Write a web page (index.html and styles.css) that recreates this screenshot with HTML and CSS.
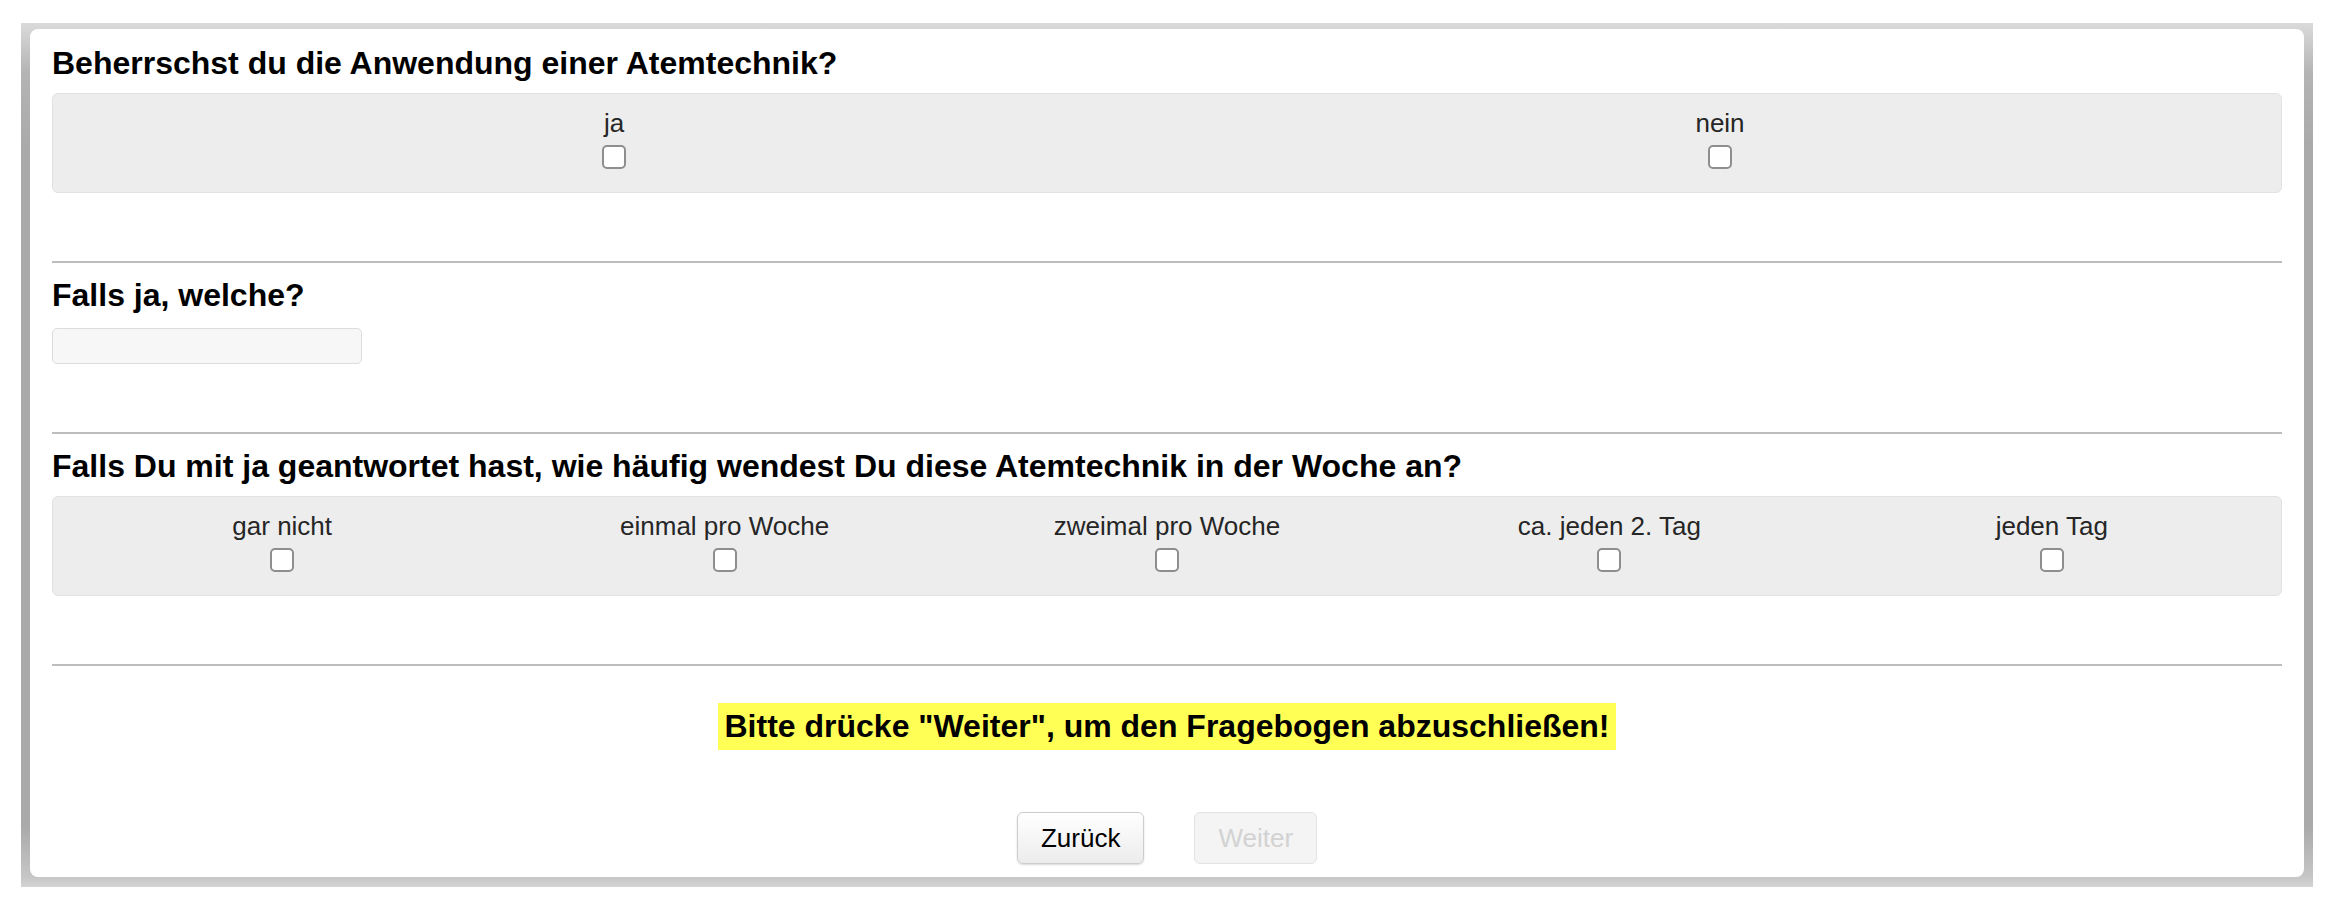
FILE: index.html
```html
<!DOCTYPE html>
<html lang="de">
<head>
<meta charset="utf-8">
<title>Fragebogen</title>
<link rel="stylesheet" href="styles.css">
</head>
<body>
<div class="frame">
  <div class="card">
    <section class="question first">
      <h2 class="q-title">Beherrschst du die Anwendung einer Atemtechnik?</h2>
      <div class="options cols-2">
        <label class="option"><span class="opt-label">ja</span><input type="checkbox" class="check"></label>
        <label class="option"><span class="opt-label">nein</span><input type="checkbox" class="check"></label>
      </div>
    </section>
    <hr class="sep">
    <section class="question">
      <h2 class="q-title">Falls ja, welche?</h2>
      <input type="text" class="text-input">
    </section>
    <hr class="sep">
    <section class="question">
      <h2 class="q-title">Falls Du mit ja geantwortet hast, wie häufig wendest Du diese Atemtechnik in der Woche an?</h2>
      <div class="options cols-5">
        <label class="option"><span class="opt-label">gar nicht</span><input type="checkbox" class="check"></label>
        <label class="option"><span class="opt-label">einmal pro Woche</span><input type="checkbox" class="check"></label>
        <label class="option"><span class="opt-label">zweimal pro Woche</span><input type="checkbox" class="check"></label>
        <label class="option"><span class="opt-label">ca. jeden 2. Tag</span><input type="checkbox" class="check"></label>
        <label class="option"><span class="opt-label">jeden Tag</span><input type="checkbox" class="check"></label>
      </div>
    </section>
    <hr class="sep">
    <div class="notice-row"><span class="notice">Bitte drücke "Weiter", um den Fragebogen abzuschließen!</span></div>
    <div class="nav">
      <button class="btn" type="button">Zurück</button>
      <button class="btn btn-disabled" type="button" disabled>Weiter</button>
    </div>
  </div>
</div>
</body>
</html>
```

FILE: styles.css
```css
html, body {
  margin: 0;
  padding: 0;
  background: #ffffff;
}

body {
  font-family: "Liberation Sans", Arial, Helvetica, sans-serif;
  color: #000;
  padding-top: 23px;
}

.frame {
  margin: 0 21px;
  padding: 6px 9px 10px 9px;
  background: linear-gradient(to bottom, #dadada 0px, #b4b4b4 50px, #aaaaaa 120px, #aaaaaa calc(100% - 60px), #c6c6c6 calc(100% - 10px), #d4d4d4 100%);
}

.card {
  background: #ffffff;
  border-radius: 8px;
  padding: 16px 22px 13px 22px;
}

.question {
  padding-top: 14px;
  padding-bottom: 68px;
}

.question.first {
  padding-top: 0;
}

.q-title {
  margin: 0;
  font-size: 32px;
  line-height: 37px;
  font-weight: bold;
  color: #000;
}

.options {
  margin-top: 11px;
  display: grid;
  background: #ededed;
  border: 1px solid #e2e2e2;
  border-radius: 6px;
  padding: 14px 8px 23px 8px;
}

.cols-2 { grid-template-columns: repeat(2, 1fr); }
.cols-5 { grid-template-columns: repeat(5, 1fr); }

.option {
  display: flex;
  flex-direction: column;
  align-items: center;
}

.opt-label {
  font-size: 26px;
  line-height: 30px;
  color: #262626;
}

.check {
  appearance: none;
  -webkit-appearance: none;
  margin: 7px 0 0 0;
  width: 24px;
  height: 24px;
  box-sizing: border-box;
  border: 2px solid #8e8e8e;
  border-radius: 5px;
  background: #ffffff;
}

.text-input {
  display: block;
  margin: 14px 0 0 0;
  width: 310px;
  height: 36px;
  box-sizing: border-box;
  background: #f7f7f7;
  border: 1px solid #dcdcdc;
  border-radius: 5px;
  padding: 0 8px;
  font-family: inherit;
  font-size: 24px;
}

.sep {
  margin: 0;
  border: 0;
  height: 2px;
  background: #bdbdbd;
}

.notice-row {
  margin-top: 37px;
  text-align: center;
}

.notice {
  display: inline-block;
  background: #ffff55;
  font-size: 32px;
  line-height: 37px;
  font-weight: bold;
  padding: 5px 6px;
  color: #000;
}

.nav {
  margin-top: 62px;
  display: flex;
  justify-content: center;
  gap: 50px;
}

.btn {
  font-family: inherit;
  font-size: 26px;
  line-height: 30px;
  padding: 10px 23px;
  border: 1px solid #cdcdcd;
  border-radius: 6px;
  background: linear-gradient(to bottom, #ffffff, #ececec);
  color: #000;
  box-shadow: 0 1px 2px rgba(0, 0, 0, 0.15);
}

.btn-disabled {
  background: #f4f4f4;
  border-color: #e3e3e3;
  color: #d2d2d2;
  box-shadow: none;
}
```
